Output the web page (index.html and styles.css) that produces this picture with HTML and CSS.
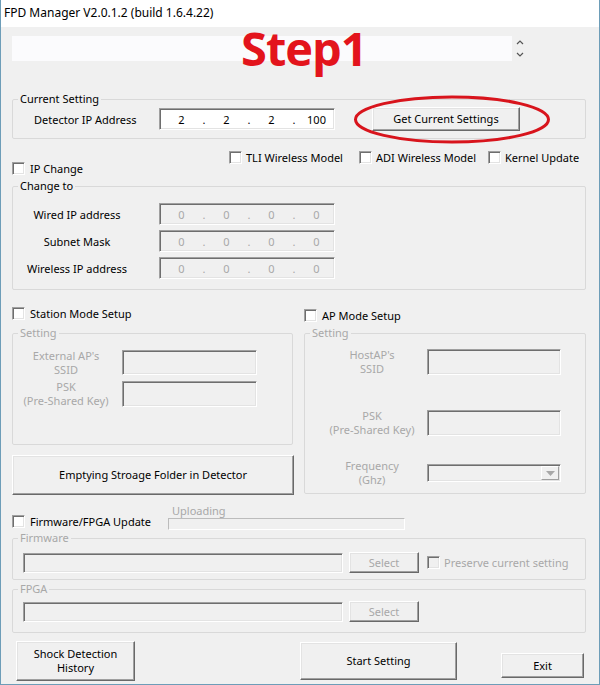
FILE: index.html
```html
<!DOCTYPE html>
<html>
<head>
<meta charset="utf-8">
<title>FPD Manager</title>
<link rel="stylesheet" href="styles.css">
</head>
<body>
<div class="window">
  <div class="titlebar">FPD Manager V2.0.1.2 (build 1.6.4.22)</div>
  <div class="client">
    <div class="toprow">
      <div class="topinput"></div>
      <svg class="spin" width="8" height="25" viewBox="0 0 8 25"><path d="M1 8 L4 5 L7 8" fill="none" stroke="#555" stroke-width="1.2"/><path d="M1 17 L4 20 L7 17" fill="none" stroke="#555" stroke-width="1.2"/></svg>
    </div>

    <fieldset class="group current">
      <legend>Current Setting</legend>
      <div class="currow">
        <span class="curlabel">Detector IP Address</span>
        <div class="ipbox"><span class="seg">2</span><span class="dot">.</span><span class="seg">2</span><span class="dot">.</span><span class="seg">2</span><span class="dot">.</span><span class="seg">100</span></div>
        <div class="btn getbtn">Get Current Settings</div>
      </div>
    </fieldset>

    <div class="models">
      <div class="chk"><span class="box"></span>TLI Wireless Model</div>
      <div class="chk"><span class="box"></span>ADI Wireless Model</div>
      <div class="chk"><span class="box"></span>Kernel Update</div>
    </div>
    <div class="chk ipchange"><span class="box"></span>IP Change</div>

    <fieldset class="group changeto">
      <legend>Change to</legend>
      <div class="iprow"><span class="iplabel">Wired IP address</span><div class="ipbox dis"><span class="seg">0</span><span class="dot">.</span><span class="seg">0</span><span class="dot">.</span><span class="seg">0</span><span class="dot">.</span><span class="seg">0</span></div></div>
      <div class="iprow"><span class="iplabel">Subnet Mask</span><div class="ipbox dis"><span class="seg">0</span><span class="dot">.</span><span class="seg">0</span><span class="dot">.</span><span class="seg">0</span><span class="dot">.</span><span class="seg">0</span></div></div>
      <div class="iprow"><span class="iplabel">Wireless IP address</span><div class="ipbox dis"><span class="seg">0</span><span class="dot">.</span><span class="seg">0</span><span class="dot">.</span><span class="seg">0</span><span class="dot">.</span><span class="seg">0</span></div></div>
    </fieldset>

    <div class="modes">
      <div class="col lcol">
        <div class="chk"><span class="box"></span>Station Mode Setup</div>
        <fieldset class="group dis station">
          <legend>Setting</legend>
          <div class="srow r1"><span class="slabel">External AP's<br>SSID</span><div class="field"></div></div>
          <div class="srow r2"><span class="slabel">PSK<br>(Pre-Shared Key)</span><div class="field"></div></div>
        </fieldset>
        <div class="btn emptybtn">Emptying Stroage Folder in Detector</div>
      </div>
      <div class="col rcol">
        <div class="chk apchk"><span class="box"></span>AP Mode Setup</div>
        <fieldset class="group dis ap">
          <legend>Setting</legend>
          <div class="arow a1"><span class="alabel">HostAP's<br>SSID</span><div class="field"></div></div>
          <div class="arow a2"><span class="alabel">PSK<br>(Pre-Shared Key)</span><div class="field"></div></div>
          <div class="arow a3"><span class="alabel">Frequency<br>(Ghz)</span><div class="field combo"><span class="drop"><svg width="9" height="5" viewBox="0 0 9 5"><path d="M0 0 H9 L4.5 5 Z" fill="#a8a8a8"/></svg></span></div></div>
        </fieldset>
      </div>
    </div>

    <div class="fwrow">
      <div class="chk fwchk"><span class="box"></span>Firmware/FPGA Update</div>
      <div class="upload">
        <div class="uplabel">Uploading</div>
        <div class="upbar"></div>
      </div>
    </div>

    <fieldset class="group dis fw">
      <legend>Firmware</legend>
      <div class="filerow">
        <div class="field file"></div>
        <div class="btn selbtn">Select</div>
        <div class="chk dischk"><span class="box"></span>Preserve current setting</div>
      </div>
    </fieldset>

    <fieldset class="group dis fpga">
      <legend>FPGA</legend>
      <div class="filerow">
        <div class="field file"></div>
        <div class="btn selbtn">Select</div>
      </div>
    </fieldset>

    <div class="bottom">
      <div class="btn shockbtn">Shock Detection<br>History</div>
      <div class="btn startbtn">Start Setting</div>
      <div class="btn exitbtn">Exit</div>
    </div>
  </div>

  <div class="step1">Step1</div>
  <svg class="ellipse" width="198" height="50" viewBox="0 0 198 50"><ellipse cx="99" cy="24.5" rx="96.5" ry="22.5" fill="none" stroke="#d8141c" stroke-width="3"/></svg>
</div>
</body>
</html>
```

FILE: styles.css
```css
* { box-sizing: border-box; }
html, body { margin: 0; padding: 0; background: #ffffff; }
body {
  font-family: "Noto Sans", "Open Sans", "DejaVu Sans", sans-serif;
  font-size: 11px;
  color: #000;
}
.window {
  position: relative;
  width: 600px;
  height: 685px;
  border-left: 1px solid #6d9db8;
  border-right: 1px solid #6d9db8;
  border-bottom: 1px solid #6d9db8;
  background: #fff;
  overflow: hidden;
}
.titlebar {
  height: 27px;
  line-height: 26px;
  padding-left: 3px;
  background: #fff;
  font-size: 12px;
}
.client {
  height: 657px;
  background: #f0f0f0;
  padding-left: 11px;
}
.toprow {
  display: flex;
  align-items: center;
  padding-top: 9px;
}
.topinput {
  width: 500px;
  height: 25px;
  background: #fbfbfd;
}
.spin { margin-left: 4px; }

/* group boxes */
.group {
  margin: 0;
  padding: 0;
  border: 1px solid #d9d9d9;
  border-radius: 2px;
  min-width: 0;
}
.group legend {
  padding: 0 2px;
  margin-left: 5px;
  line-height: 16px;
  font-size: 11px;
}
.dis, .dis legend { color: #a8a8a8; }

/* sunken fields */
.ipbox, .field {
  background: #fff;
  border: 1px solid;
  border-color: #a0a0a0 #fff #fff #a0a0a0;
  box-shadow: inset 1px 1px #6e6e6e, inset -1px -1px #e3e3e3;
}
.ipbox {
  display: flex;
  align-items: center;
  width: 176px;
  height: 22px;
  padding-left: 6px;
}
.ipbox.dis, .dis .field { background: #f0f0f0; }
.ipbox.dis { color: #a8a8a8; }
.seg { width: 31px; text-align: center; }
.dot { width: 14px; text-align: center; }

/* buttons */
.btn {
  display: flex;
  align-items: center;
  justify-content: center;
  text-align: center;
  background: #f0f0f0;
  border: 1px solid;
  border-color: #fff #696969 #696969 #fff;
  box-shadow: inset -1px -1px #a0a0a0, inset 1px 1px #e3e3e3;
  line-height: 14px;
}

/* checkboxes */
.chk {
  display: flex;
  align-items: center;
  height: 14px;
  gap: 5px;
  white-space: nowrap;
}
.box {
  flex: none;
  width: 13px;
  height: 13px;
  background: #fff;
  border: 1px solid;
  border-color: #a0a0a0 #fff #fff #a0a0a0;
  box-shadow: inset 1px 1px #6e6e6e, inset -1px -1px #e3e3e3;
}

/* current setting */
.current { width: 574px; margin-top: 30px; padding-bottom: 7px; }
.currow {
  display: flex;
  align-items: center;
  height: 24px;
  padding-left: 21px;
}
.curlabel { width: 125px; }
.getbtn { margin-left: 37px; width: 148px; height: 24px; }

.models {
  display: grid;
  grid-template-columns: 130px 129px auto;
  padding-left: 217px;
  margin-top: 11px;
}
.models .chk { gap: 4px; }
.ipchange { margin-top: -3px; }

/* change to */
.changeto { width: 574px; margin-top: 3px; padding: 9px 0 10px; }
.iprow { display: flex; align-items: center; height: 22px; }
.iprow + .iprow { margin-top: 5px; }
.iplabel { width: 128px; text-align: center; }
.iprow .ipbox { margin-left: 18px; }

/* modes */
.modes { display: flex; gap: 10px; margin-top: 16px; height: 189px; }
.col { width: 282px; }
.station { width: 281px; margin-top: 5px; padding: 9px 0 37px; }
.srow { display: flex; align-items: center; }
.srow.r1 { height: 25px; }
.srow.r2 { height: 26px; margin-top: 6px; }
.slabel { width: 106px; text-align: center; line-height: 14px; flex: none; }
.srow .field { margin-left: 3px; width: 135px; height: 100%; }
.emptybtn { margin-top: 10px; width: 282px; height: 40px; }

.apchk { margin-top: 2px; }
.ap { width: 282px; margin-top: 3px; padding: 8px 0 11px 12px; }
.ap legend { margin-left: -7px; }
.arow { display: flex; align-items: center; }
.arow.a1 { height: 26px; }
.arow.a2 { height: 26px; margin-top: 35px; }
.arow.a3 { height: 18px; margin-top: 28px; }
.alabel { width: 110px; text-align: center; line-height: 14px; flex: none; }
.arow .field { width: 134px; height: 100%; }
.combo { display: flex; justify-content: flex-end; align-items: center; padding-right: 1px; }
.drop {
  display: flex;
  align-items: center;
  justify-content: center;
  width: 18px;
  height: 14px;
  background: #f0f0f0;
  border: 1px solid;
  border-color: #fff #a0a0a0 #a0a0a0 #fff;
}

/* firmware */
.fwrow { display: flex; align-items: flex-end; margin-top: 9px; height: 26px; }
.fwchk { width: 156px; margin-bottom: 2px; }
.uplabel { color: #a8a8a8; line-height: 14px; padding-left: 4px; }
.upbar {
  width: 237px;
  height: 12px;
  border: 1px solid;
  border-color: #bcbcbc #fff #fff #bcbcbc;
}
.fw { width: 574px; padding: 6px 0 6px; }
.fpga { width: 574px; margin-top: 1px; padding: 4px 0 10px; }
.filerow { display: flex; align-items: center; height: 21px; padding-left: 10px; }
.file { width: 320px; height: 20px; }
.selbtn { margin-left: 6px; width: 70px; height: 21px; color: #a8a8a8; }
.dischk { margin-left: 8px; gap: 4px; }
.dischk .box { background: #f0f0f0; }

/* bottom */
.bottom { display: flex; align-items: flex-start; margin-top: 8px; }
.shockbtn { margin-left: 4px; width: 119px; height: 40px; }
.startbtn { margin-left: 165px; margin-top: 1px; width: 157px; height: 38px; }
.exitbtn { margin-left: 44px; margin-top: 12px; width: 83px; height: 25px; }

/* overlays */
.step1 {
  position: absolute;
  left: 240px;
  top: 25px;
  font-family: "Open Sans", "Noto Sans", sans-serif;
  font-weight: 700;
  font-size: 47px;
  line-height: 47px;
  color: #e3141c;
  letter-spacing: -1px;
}
.ellipse { position: absolute; left: 352px; top: 95px; }
```
